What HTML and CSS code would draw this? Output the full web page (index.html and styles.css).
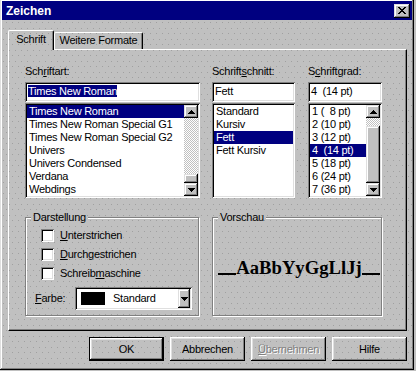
FILE: index.html
```html
<!DOCTYPE html>
<html lang="de">
  <head>
    <meta charset="UTF-8" />
    <meta name="viewport" content="width=device-width, initial-scale=1.0" />
    <title>Zeichen</title>
    <link rel="stylesheet" href="styles.css">
  </head>
  <body>
    <div class="window dots">
      <div class="title-bar">
        <span class="title">Zeichen</span>
        <span class="title-close raised">
          <svg width="8" height="7" viewBox="0 0 8 7" shape-rendering="crispEdges">
            <path d="M0 0h2v1H0zM6 0h2v1H6zM1 1h2v1H1zM5 1h2v1H5zM2 2h4v1H2zM3 3h2v1H3zM2 4h4v1H2zM1 5h2v1H1zM5 5h2v1H5zM0 6h2v1H0zM6 6h2v1H6z" fill="#000"/>
          </svg>
        </span>
      </div>

      <div class="window-body">
        <div class="tabs">
          <div class="tab tab-active dots">Schrift</div>
          <div class="tab">Weitere Formate</div>
        </div>

        <div class="tab-panel">
          <div class="font-grid">
            <div class="field">
              <div class="field-label">Sch<u>r</u>iftart:</div>
              <div class="textbox"><span class="text-selected">Times New Roman</span></div>
              <div class="listbox">
                <ul class="list">
                  <li class="list-item is-selected">Times New Roman</li>
                  <li class="list-item">Times New Roman Special G1</li>
                  <li class="list-item">Times New Roman Special G2</li>
                  <li class="list-item">Univers</li>
                  <li class="list-item">Univers Condensed</li>
                  <li class="list-item">Verdana</li>
                  <li class="list-item">Webdings</li>
                </ul>
                <div class="scrollbar">
                  <span class="scroll-button raised">
                    <svg width="7" height="4" viewBox="0 0 7 4" shape-rendering="crispEdges"><path d="M3 0h1v1H3zM2 1h3v1H2zM1 2h5v1H1zM0 3h7v1H0z" fill="#000"/></svg>
                  </span>
                  <span class="scroll-track"><span class="scroll-thumb raised thumb-small"></span></span>
                  <span class="scroll-button raised">
                    <svg width="7" height="4" viewBox="0 0 7 4" shape-rendering="crispEdges"><path d="M0 0h7v1H0zM1 1h5v1H1zM2 2h3v1H2zM3 3h1v1H3z" fill="#000"/></svg>
                  </span>
                </div>
              </div>
            </div>

            <div class="field field-style">
              <div class="field-label">Schrift<u>s</u>chnitt:</div>
              <div class="textbox">Fett</div>
              <div class="listbox">
                <ul class="list">
                  <li class="list-item">Standard</li>
                  <li class="list-item">Kursiv</li>
                  <li class="list-item is-selected">Fett</li>
                  <li class="list-item">Fett Kursiv</li>
                </ul>
              </div>
            </div>

            <div class="field">
              <div class="field-label">S<u>c</u>hriftgrad:</div>
              <div class="textbox">4  (14 pt)</div>
              <div class="listbox">
                <ul class="list">
                  <li class="list-item">1 (  8 pt)</li>
                  <li class="list-item">2 (10 pt)</li>
                  <li class="list-item">3 (12 pt)</li>
                  <li class="list-item is-selected">4  (14 pt)</li>
                  <li class="list-item">5 (18 pt)</li>
                  <li class="list-item">6 (24 pt)</li>
                  <li class="list-item">7 (36 pt)</li>
                </ul>
                <div class="scrollbar">
                  <span class="scroll-button raised">
                    <svg width="7" height="4" viewBox="0 0 7 4" shape-rendering="crispEdges"><path d="M3 0h1v1H3zM2 1h3v1H2zM1 2h5v1H1zM0 3h7v1H0z" fill="#000"/></svg>
                  </span>
                  <span class="scroll-track"><span class="scroll-thumb raised thumb-large"></span></span>
                  <span class="scroll-button raised">
                    <svg width="7" height="4" viewBox="0 0 7 4" shape-rendering="crispEdges"><path d="M0 0h7v1H0zM1 1h5v1H1zM2 2h3v1H2zM3 3h1v1H3z" fill="#000"/></svg>
                  </span>
                </div>
              </div>
            </div>

            <fieldset class="group group-effects">
              <legend class="group-title dots">Darstellung</legend>
              <div class="group-body">
                <div class="check"><span class="check-box"></span><span><u>U</u>nterstrichen</span></div>
                <div class="check"><span class="check-box"></span><span><u>D</u>urchgestrichen</span></div>
                <div class="check"><span class="check-box"></span><span>Schreib<u>m</u>aschine</span></div>
                <div class="color-row">
                  <span class="color-label"><u>F</u>arbe:</span>
                  <div class="combo">
                    <span class="combo-swatch"></span>
                    <span class="combo-text">Standard</span>
                    <span class="combo-button raised">
                      <svg width="7" height="4" viewBox="0 0 7 4" shape-rendering="crispEdges"><path d="M0 0h7v1H0zM1 1h5v1H1zM2 2h3v1H2zM3 3h1v1H3z" fill="#000"/></svg>
                    </span>
                  </div>
                </div>
              </div>
            </fieldset>

            <fieldset class="group group-preview">
              <legend class="group-title dots">Vorschau</legend>
              <div class="preview-sample">
                <span class="preview-line"></span>
                <span class="preview-text">AaBbYyGgLlJj</span>
                <span class="preview-line"></span>
              </div>
            </fieldset>
          </div>
        </div>

        <div class="buttons">
          <button class="button button-default">OK</button>
          <button class="button">Abbrechen</button>
          <button class="button button-disabled"><u>Ü</u>bernehmen</button>
          <button class="button">Hilfe</button>
        </div>
      </div>
    </div>
  </body>
</html>
```

FILE: styles.css
```css
:root {
  --face: #c0c0c0;
  --light: #dfdfdf;
  --shadow: #808080;
  --dark: #000;
  --navy: #000080;
  --dot: #a0a0a0;
}

* {
  box-sizing: border-box;
}

html,
body {
  margin: 0;
  height: 100%;
  overflow: hidden;
}

body {
  background: var(--face);
  font-family: "Liberation Sans", Arial, sans-serif;
  font-size: 11px;
  letter-spacing: -0.25px;
  line-height: 13px;
  color: #000;
}

u {
  text-decoration-thickness: 1px;
  text-underline-offset: 1px;
}

/* dithered dialog surface, pinned to the viewport so every layer lines up */
.dots {
  background-color: var(--face);
  background-image:
    conic-gradient(from 270deg at 1px 1px, var(--dot) 0 90deg, transparent 0),
    conic-gradient(from 270deg at 1px 1px, var(--dot) 0 90deg, transparent 0);
  background-size: 6px 11px;
  background-position: 0 0, 3px 6px;
  background-attachment: fixed;
}

.raised {
  background: var(--face);
  box-shadow:
    inset -1px -1px var(--dark),
    inset 1px 1px var(--light),
    inset -2px -2px var(--shadow),
    inset 2px 2px #fff;
}

.window {
  width: 414px;
  height: 371px;
  margin-top: -1px;
  padding: 2px;
  display: flex;
  flex-direction: column;
  box-shadow:
    inset -1px -1px var(--dark),
    inset 1px 1px var(--light),
    inset -2px -2px var(--shadow),
    inset 2px 2px #fff;
}

.title-bar {
  height: 19px;
  padding: 0 2px;
  display: flex;
  align-items: center;
  justify-content: space-between;
  background: var(--navy);
  color: #fff;
}

.title {
  padding: 2px 0 0 2px;
  font-size: 12px;
  font-weight: bold;
  letter-spacing: 0;
}

.title-close {
  width: 16px;
  height: 14px;
  display: flex;
  align-items: center;
  justify-content: center;
}

.window-body {
  flex: 1;
  padding: 10px 5px 0 6px;
}

/* tabs */
.tabs {
  height: 19px;
  display: flex;
  align-items: flex-end;
}

.tab {
  height: 17px;
  padding: 0 4px 1px;
  display: flex;
  align-items: center;
  justify-content: center;
  border-top: 1px solid #fff;
  border-left: 1px solid #fff;
  border-right: 1px solid var(--dark);
  border-radius: 2px 2px 0 0;
  box-shadow: inset -1px 0 var(--shadow);
}

.tab-active {
  position: relative;
  z-index: 1;
  width: 46px;
  height: 20px;
  margin-bottom: -1px;
  padding-bottom: 3px;
}

.tab-active + .tab {
  width: 89px;
}

.tab-panel {
  height: 282px;
  padding: 15px 0 0 16px;
  border: 1px solid;
  border-color: #fff var(--dark) var(--dark) #fff;
  box-shadow: inset -1px -1px var(--shadow);
}

.font-grid {
  display: grid;
  grid-template-columns: 175px 84px 74px;
  column-gap: 12px;
  row-gap: 13px;
}

.field-style {
  width: 83px;
}

.field-label {
  margin-bottom: 4px;
}

.textbox {
  height: 20px;
  padding: 3px 2px 0 3px;
  background: #fff;
  white-space: pre;
  box-shadow:
    inset 1px 1px var(--shadow),
    inset -1px -1px #fff,
    inset 2px 2px var(--dark),
    inset -2px -2px var(--light);
}

.text-selected {
  background: var(--navy);
  color: #fff;
}

.listbox {
  height: 95px;
  margin-top: 1px;
  padding: 2px;
  display: flex;
  background: #fff;
  box-shadow:
    inset 1px 1px var(--shadow),
    inset -1px -1px #fff,
    inset 2px 2px var(--dark),
    inset -2px -2px var(--light);
}

.list {
  flex: 1;
  margin: 0;
  padding: 0;
  list-style: none;
  overflow: hidden;
}

.list-item {
  height: 13px;
  padding-left: 2px;
  white-space: pre;
}

.list-item.is-selected {
  background: var(--navy);
  color: #fff;
}

.scrollbar {
  width: 14px;
  display: flex;
  flex-direction: column;
}

.scroll-button {
  height: 13px;
  display: flex;
  align-items: center;
  justify-content: center;
}

.scroll-track {
  flex: 1;
  display: flex;
  flex-direction: column;
  justify-content: flex-end;
  background: repeating-conic-gradient(#fff 0 25%, var(--face) 0 50%) 0 0 / 2px 2px;
}

.thumb-small {
  height: 9px;
}

.thumb-large {
  height: 57px;
}

/* group boxes */
.group {
  height: 105px;
  margin: 0;
  padding: 0;
  min-width: 0;
  border: 1px solid var(--shadow);
  box-shadow: inset 1px 1px #fff, 1px 1px #fff;
}

.group-effects {
  width: 174px;
}

.group-preview {
  grid-column: 2 / 4;
}

.group-title {
  margin-left: 5px;
  padding: 0 2px;
  line-height: 13px;
}

.group-body {
  padding: 2px 0 0 15px;
}

.check {
  height: 19px;
  display: flex;
  align-items: center;
  gap: 6px;
}

.check-box {
  width: 13px;
  height: 13px;
  background: #fff;
  box-shadow:
    inset 1px 1px var(--shadow),
    inset -1px -1px #fff,
    inset 2px 2px var(--dark),
    inset -2px -2px var(--light);
}

.color-row {
  margin: 4px 0 0 -6px;
  display: flex;
  align-items: center;
}

.color-label {
  width: 40px;
}

.combo {
  width: 117px;
  height: 23px;
  padding: 2px;
  display: flex;
  align-items: center;
  background: #fff;
  box-shadow:
    inset 1px 1px var(--shadow),
    inset -1px -1px #fff,
    inset 2px 2px var(--dark),
    inset -2px -2px var(--light);
}

.combo-swatch {
  width: 24px;
  height: 13px;
  margin-left: 4px;
  background: #000;
}

.combo-text {
  flex: 1;
  margin-left: 8px;
}

.combo-button {
  width: 12px;
  height: 19px;
  display: flex;
  align-items: center;
  justify-content: center;
}

.preview-sample {
  margin-top: 33px;
  padding: 0 1px 0 5px;
  display: flex;
  align-items: baseline;
}

.preview-line {
  flex: 1;
  height: 2px;
  background: #000;
  transform: translateY(1px);
}

.preview-text {
  font-family: "Liberation Serif", "Times New Roman", serif;
  font-size: 18.67px;
  font-weight: bold;
  letter-spacing: 0;
  line-height: 21px;
}

/* dialog buttons */
.buttons {
  margin-top: 6px;
  display: flex;
  justify-content: flex-end;
  gap: 6px;
}

.button {
  width: 75px;
  height: 24px;
  padding: 0;
  border: 0;
  background: transparent;
  font: inherit;
  letter-spacing: inherit;
  color: #000;
  box-shadow:
    inset -1px -1px var(--dark),
    inset 1px 1px #fff,
    inset -2px -2px var(--shadow),
    inset 2px 2px var(--light);
}

.button-default {
  border: 1px solid var(--dark);
}

.button-disabled {
  color: var(--shadow);
  text-shadow: 1px 1px #fff;
}
```
